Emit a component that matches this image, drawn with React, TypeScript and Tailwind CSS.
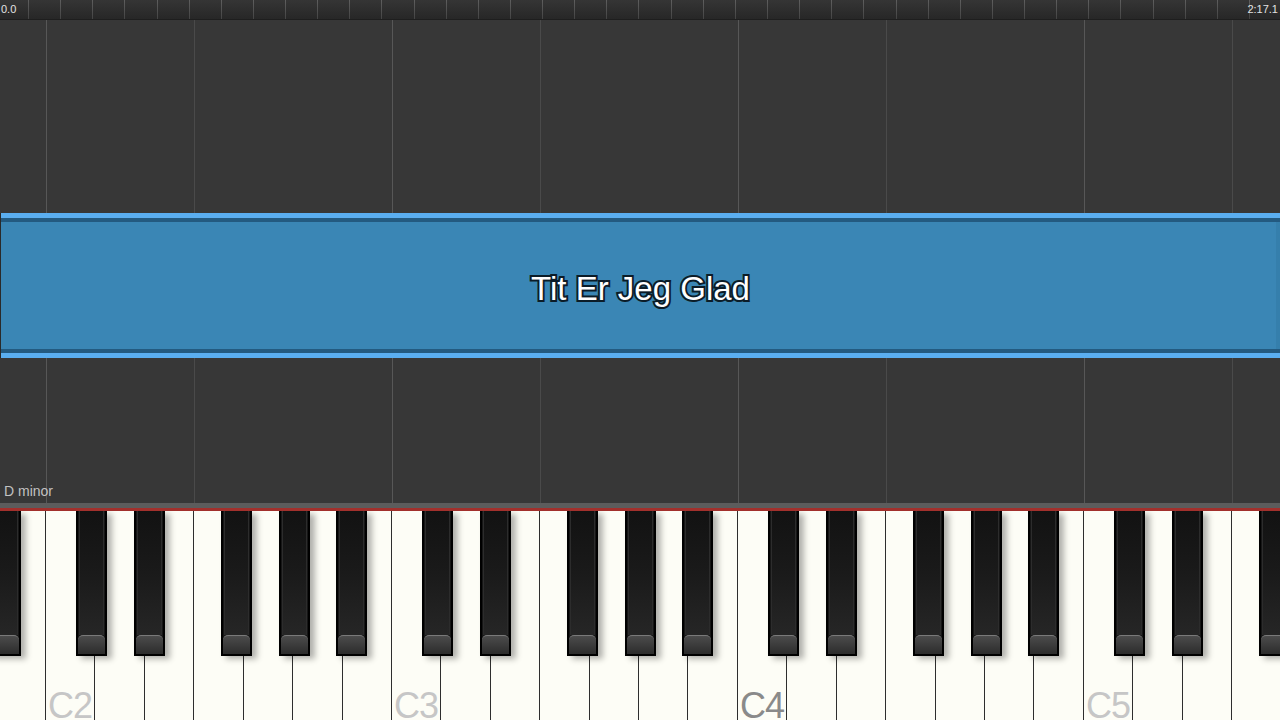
const OCTAVE = 346;
const WHITE_W = OCTAVE / 7;
const C2_X = 46;

const whiteKeys = Array.from({ length: 27 }, (_, i) => i);
const blackOffsets = [30, 88, 175, 233, 290];

const blackKeys: number[] = [];
for (let o = -1; o < 4; o++) {
  for (const off of blackOffsets) {
    const x = C2_X + o * OCTAVE + off;
    if (x > -30 && x < 1280) blackKeys.push(x);
  }
}

const gridLines: { x: number; strong: boolean }[] = [];
for (let o = 0; o < 4; o++) {
  gridLines.push({ x: C2_X + o * OCTAVE, strong: true });
  gridLines.push({ x: C2_X + o * OCTAVE + 3 * WHITE_W, strong: false });
}

const ticks = Array.from({ length: 40 }, (_, i) => 28 + i * 32.13).filter((x) => x < 1280);

const labels = [
  { name: "C2", x: C2_X, dark: false },
  { name: "C3", x: C2_X + OCTAVE, dark: false },
  { name: "C4", x: C2_X + 2 * OCTAVE, dark: true },
  { name: "C5", x: C2_X + 3 * OCTAVE, dark: false },
];

function Timeline() {
  return (
    <div className="relative h-[20px] shrink-0 bg-gradient-to-b from-[#353535] to-[#272727] border-b border-[#1e1e1e]">
      {ticks.map((x) => (
        <div key={x} className="absolute top-0 h-full w-px bg-gradient-to-b from-[#5e5e5e] to-[#444]" style={{ left: x }} />
      ))}
      <span className="absolute left-[1px] top-[4px] text-[11px] leading-none text-[#e2e2e2]">0.0</span>
      <span className="absolute right-[2px] top-[4px] text-[11px] leading-none text-[#e2e2e2]">2:17.1</span>
    </div>
  );
}

function Roll() {
  return (
    <div className="relative flex-1 flex flex-col bg-[#373737]">
      {gridLines.map((l) => (
        <div
          key={l.x}
          className={`absolute top-0 bottom-0 w-px ${l.strong ? "bg-[#575757]" : "bg-[#4a4a4a]"}`}
          style={{ left: Math.round(l.x) }}
        />
      ))}
      <div className="h-[193px] shrink-0" />
      <div className="relative z-10 flex flex-col h-[145px] shrink-0 border-l border-[#2a2a2a]">
        <div className="h-[5px] bg-[#5aaef0]" />
        <div className="h-[4px] bg-[#235a80]" />
        <div className="relative flex-1 flex items-center justify-center bg-[#3a86b5]">
          <span className="mt-[6px] text-[33px] text-white [paint-order:stroke_fill] [-webkit-text-stroke:4px_#0b1c28]">
            Tit Er Jeg Glad
          </span>
          <div className="absolute right-0 top-0 bottom-0 w-[4px] bg-[#357fac]" />
        </div>
        <div className="h-[4px] bg-[#235a80]" />
        <div className="h-[5px] bg-[#5aaef0]" />
      </div>
      <span className="absolute left-[4px] bottom-[5px] text-[14px] leading-none text-[#c2c2c2]">D minor</span>
    </div>
  );
}

function BlackKey({ x }: { x: number }) {
  return (
    <div
      className="absolute top-0 flex h-[145px] w-[31px] flex-col border-2 border-t-0 border-black bg-[#161616] shadow-[5px_3px_6px_rgba(0,0,0,0.3)]"
      style={{ left: x }}
    >
      <div className="flex-1 mx-[1px] border-x border-[#2c2c2c] bg-gradient-to-b from-[#121212] via-[#1a1a1a] to-[#262626]" />
      <div className="h-[19px] rounded-t-[5px] border-t border-[#7a7a7a] bg-gradient-to-b from-[#4c4c4c] to-[#2c2c2c]" />
    </div>
  );
}

function Piano() {
  return (
    <div className="relative h-[209px] shrink-0 overflow-hidden bg-[#fdfdf6]">
      <div className="flex h-full" style={{ marginLeft: C2_X - WHITE_W }}>
        {whiteKeys.map((i) => (
          <div
            key={i}
            className="relative h-full shrink-0 border-r-[1.5px] border-[#2e2e2e] bg-[#fdfdf6]"
            style={{ width: WHITE_W }}
          />
        ))}
      </div>
      {labels.map((l) => (
        <span
          key={l.name}
          className={`absolute top-[177px] text-[36px] leading-none tracking-[-1px] ${l.dark ? "text-[#8a8a8a]" : "text-[#c6c6c6]"}`}
          style={{ left: l.x + 2 }}
        >
          {l.name}
        </span>
      ))}
      {blackKeys.map((x) => (
        <BlackKey key={x} x={x} />
      ))}
    </div>
  );
}

export default function App() {
  return (
    <div className="flex h-[720px] w-[1280px] flex-col overflow-hidden bg-[#373737] font-['Liberation_Sans',Arial,sans-serif]">
      <Timeline />
      <Roll />
      <div className="h-[5px] shrink-0 bg-[#5c5c5c]" />
      <div className="h-[3px] shrink-0 bg-[#a2302c]" />
      <Piano />
    </div>
  );
}
